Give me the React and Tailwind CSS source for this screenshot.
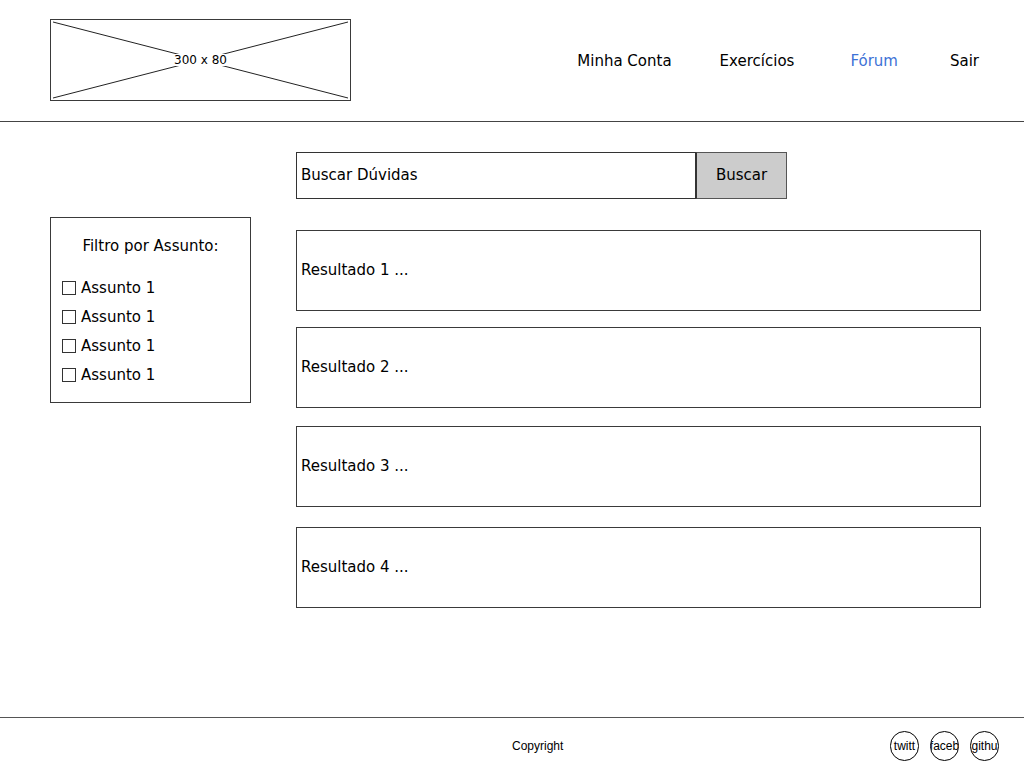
import React from 'react';

const font = { fontFamily: '"DejaVu Sans", Verdana, sans-serif' };

const Logo = () => (
  <div className="relative w-[301px] h-[82px] border border-[#3a3a3a] bg-white">
    <svg className="absolute inset-0 w-full h-full" viewBox="0 0 299 80" preserveAspectRatio="none">
      <line x1="2" y1="2" x2="297" y2="78" stroke="#222" strokeWidth="1" />
      <line x1="297" y1="2" x2="2" y2="78" stroke="#222" strokeWidth="1" />
    </svg>
    <div className="absolute inset-0 flex items-center justify-center">
      <span className="bg-white px-[1px] text-[12px] leading-none text-black">300 x 80</span>
    </div>
  </div>
);

const NavItem = ({ children, active, className }) => (
  <a href="#" className={`text-[15px] ${active ? 'text-[#3d72d6]' : 'text-black'} ${className}`}>
    {children}
  </a>
);

const Checkbox = ({ label }) => (
  <label className="flex items-center h-[29px]">
    <span className="w-[14px] h-[14px] border border-[#333] bg-white" />
    <span className="ml-[5px] text-[15px] text-black">{label}</span>
  </label>
);

const results = [
  { text: 'Resultado 1 ...', mt: 'mt-[31px]' },
  { text: 'Resultado 2 ...', mt: 'mt-[16px]' },
  { text: 'Resultado 3 ...', mt: 'mt-[18px]' },
  { text: 'Resultado 4 ...', mt: 'mt-[20px]' },
];

const Social = ({ label }) => (
  <div className="w-[29px] h-[30px] rounded-full border border-black flex items-center justify-center overflow-hidden">
    <span className="text-[12px] leading-none text-black" style={{ fontFamily: '"Liberation Sans", sans-serif' }}>
      {label}
    </span>
  </div>
);

export default function App() {
  return (
    <div className="w-[1024px] h-[768px] bg-white flex flex-col overflow-hidden" style={font}>
      <header className="h-[122px] border-b border-[#444] flex items-start shrink-0">
        <div className="ml-[50px] mt-[19px]">
          <Logo />
        </div>
        <nav className="ml-auto mt-[50px] flex items-center mr-[45px]">
          <NavItem>Minha Conta</NavItem>
          <NavItem className="ml-[48px]">Exercícios</NavItem>
          <NavItem active className="ml-[56px]">Fórum</NavItem>
          <NavItem className="ml-[52px]">Sair</NavItem>
        </nav>
      </header>

      <main className="flex-1 flex pl-[50px]">
        <aside className="pt-[95px] shrink-0">
          <div className="w-[201px] h-[186px] border border-[#3a3a3a] px-[11px]">
            <p className="text-center text-[15px] mt-[17px] text-black">Filtro por Assunto:</p>
            <div className="mt-[16px]">
              <Checkbox label="Assunto 1" />
              <Checkbox label="Assunto 1" />
              <Checkbox label="Assunto 1" />
              <Checkbox label="Assunto 1" />
            </div>
          </div>
        </aside>

        <section className="ml-[45px] w-[685px] shrink-0 pt-[30px]">
          <div className="flex h-[47px]">
            <div className="w-[400px] border border-[#333] flex items-center px-[4px] text-[15px] text-black">
              Buscar Dúvidas
            </div>
            <button className="w-[91px] bg-[#cccccc] border border-[#555] border-l-[#333] text-[15px] text-black">
              Buscar
            </button>
          </div>
          {results.map((r) => (
            <div key={r.text} className={`${r.mt} h-[81px] border border-[#3a3a3a] flex items-center px-[4px] text-[15px] text-black`}>
              {r.text}
            </div>
          ))}
        </section>
      </main>

      <footer className="h-[51px] border-t border-[#555] shrink-0 relative flex items-center">
        <span className="absolute left-[512px] top-[19px] text-[12px] text-black" style={{ fontFamily: '"Liberation Sans", sans-serif' }}>
          Copyright
        </span>
        <div className="ml-auto mr-[25px] mt-[6px] flex gap-[11px]">
          <Social label="twitt" />
          <Social label="faceb" />
          <Social label="githu" />
        </div>
      </footer>
    </div>
  );
}
